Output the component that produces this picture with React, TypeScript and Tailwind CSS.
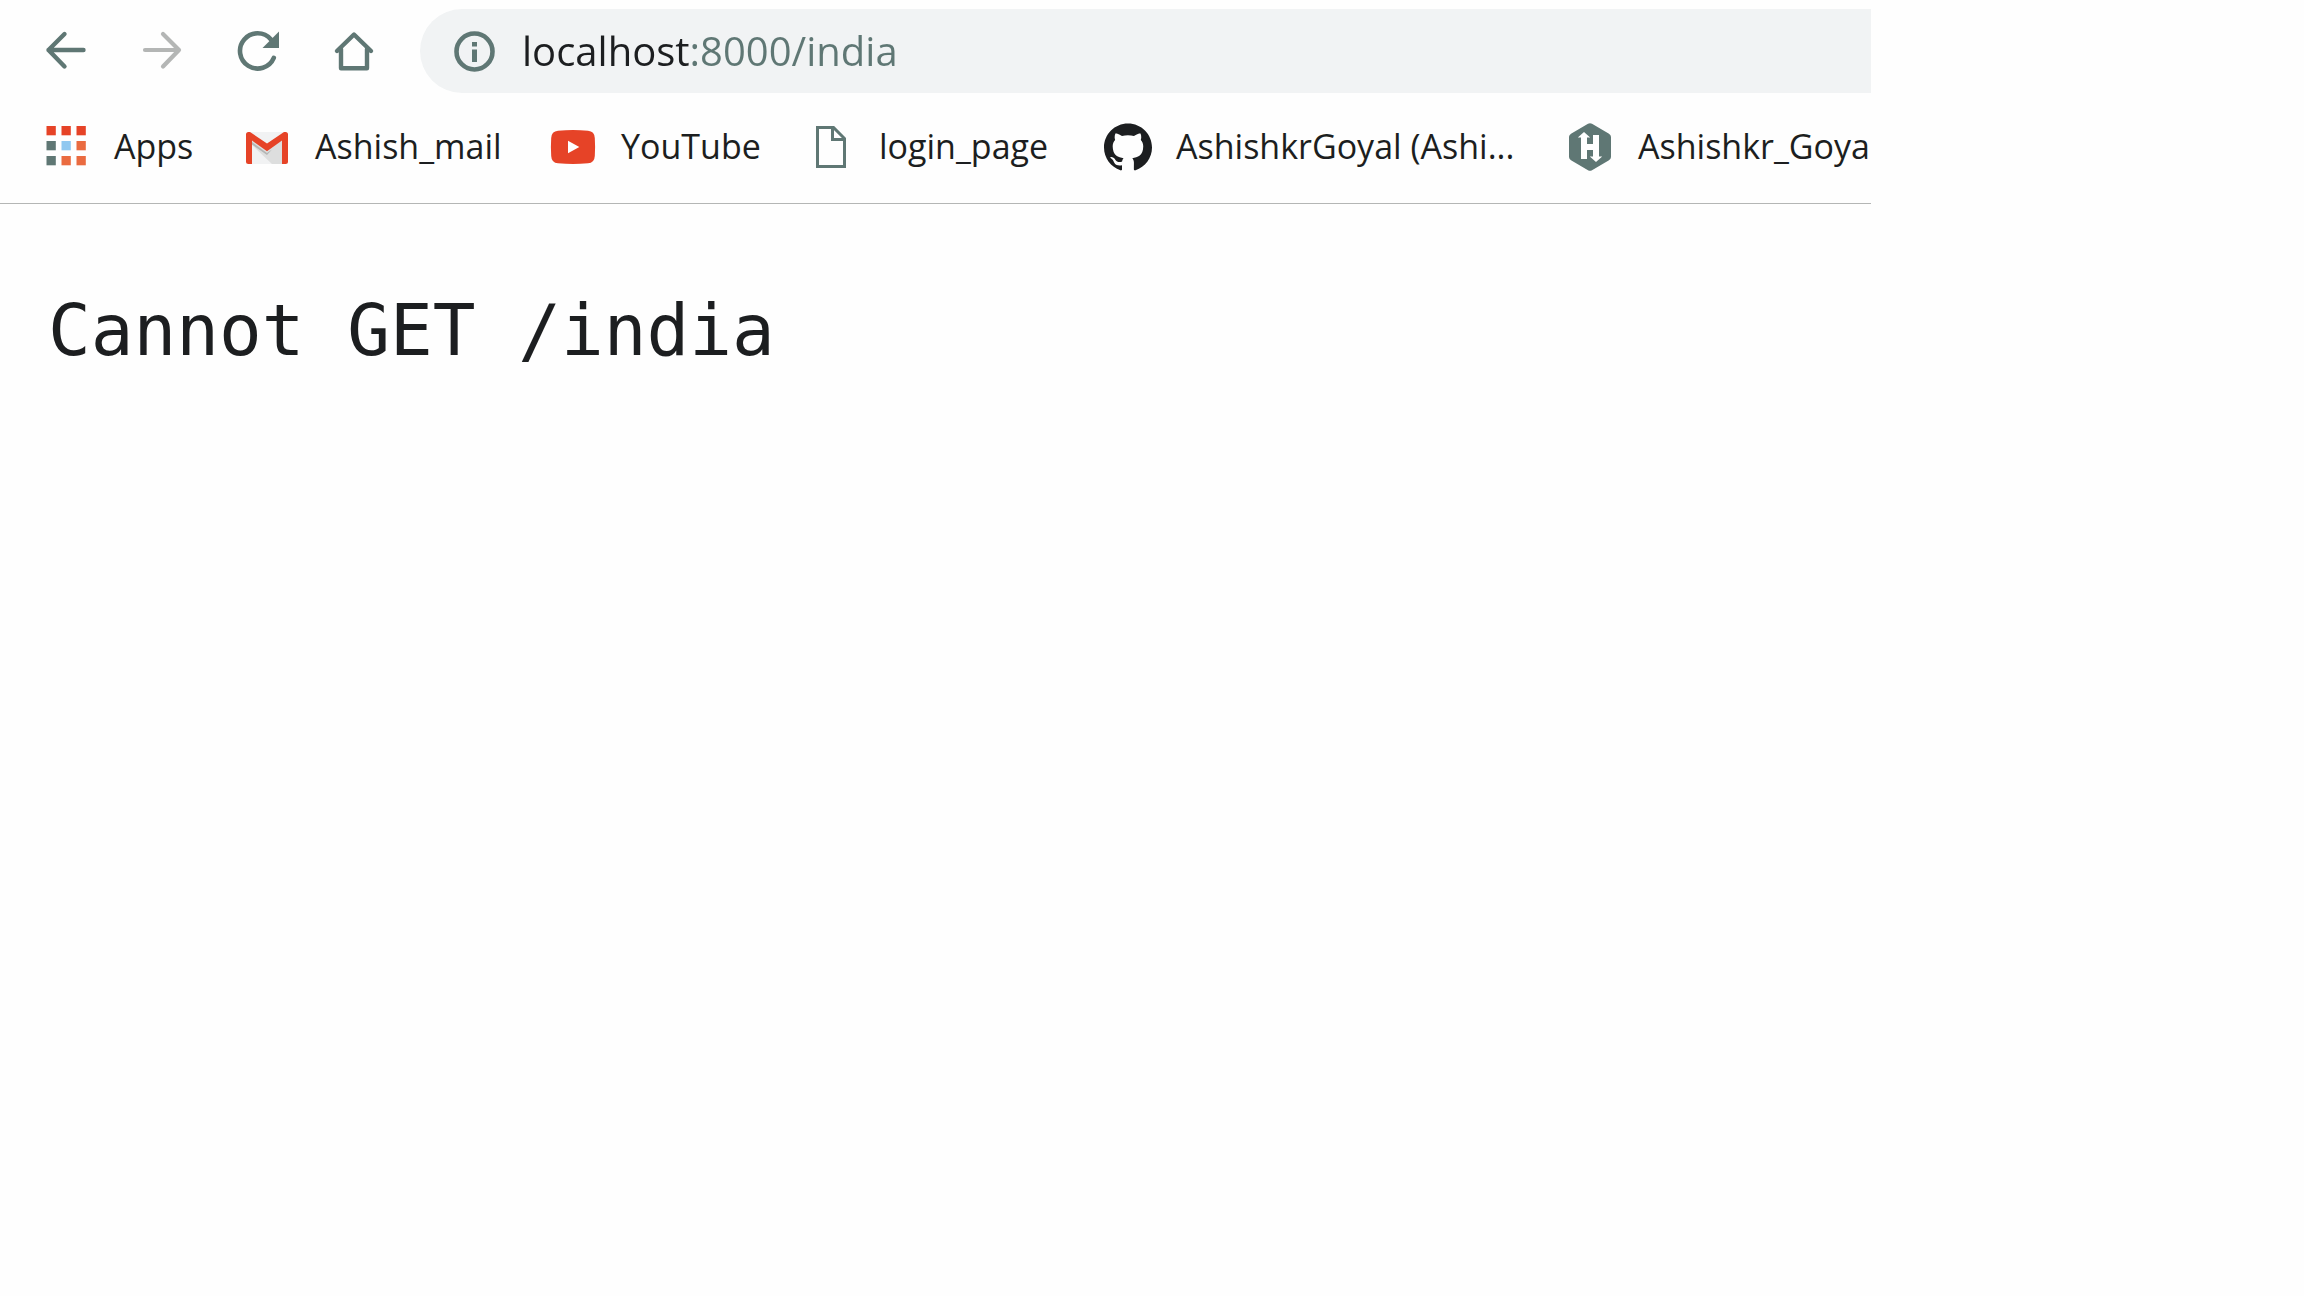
import React from "react";
import { SiGithub } from "react-icons/si";

const icon = "block size-12 shrink-0";

function BackIcon() {
  return (
    <svg viewBox="0 0 48 48" className={icon} fill="none" stroke="#5f7774" strokeWidth="4.4" strokeLinecap="round" strokeLinejoin="round">
      <path d="M6.5 23H41.5M22.5 7L6.5 23L22.5 39.5" />
    </svg>
  );
}

function ForwardIcon() {
  return (
    <svg viewBox="0 0 48 48" className={icon} fill="none" stroke="#b4b6b5" strokeWidth="4.2" strokeLinecap="round" strokeLinejoin="round">
      <path d="M7 23H41M25 7L41 23L25 39.5" />
    </svg>
  );
}

function ReloadIcon() {
  return (
    <svg viewBox="0 0 48 48" className={icon}>
      <path d="M37 12.5A17.6 17.6 0 1 0 39.8 30.8" fill="none" stroke="#5f7774" strokeWidth="4.6" strokeLinecap="round" />
      <path d="M45 4.5V21H28.5z" fill="#5f7774" />
    </svg>
  );
}

function HomeIcon() {
  return (
    <svg viewBox="0 0 48 48" className={icon} fill="none" stroke="#5f7774" strokeWidth="4.4" strokeLinecap="round" strokeLinejoin="round">
      <path d="M7 24L24 7.5L41 24M11 22V41.3H37V22" />
    </svg>
  );
}

function InfoIcon() {
  return (
    <svg viewBox="0 0 48 48" className={icon}>
      <circle cx="24.5" cy="24.5" r="18" fill="none" stroke="#5f7774" strokeWidth="4.6" />
      <path d="M22 15h5v4.5h-5zM22 22.5h5V35h-5z" fill="#5f7774" />
    </svg>
  );
}

function AppsIcon() {
  const cells = [
    [4.5, 3, "#e64327"], [19.5, 3, "#e64327"], [34.5, 3, "#e64327"],
    [4.5, 18, "#5f7774"], [19.5, 18, "#90c8f0"], [34.5, 18, "#ea6b40"],
    [4.5, 33, "#5f7774"], [19.5, 33, "#ea6b40"], [34.5, 33, "#ea6b40"],
  ] as const;
  return (
    <svg viewBox="0 0 48 48" className={icon}>
      {cells.map(([x, y, c]) => (
        <rect key={`${x}-${y}`} x={x} y={y} width="9.3" height="9.3" fill={c} />
      ))}
    </svg>
  );
}

function GmailIcon() {
  return (
    <svg viewBox="0 0 48 48" className={icon}>
      <rect x="3" y="9" width="42" height="32" rx="2.5" fill="#f1f2f3" />
      <path d="M9 17L24 28L39 17V41H29L9 22z" fill="#dddede" />
      <path d="M9 19L24 30L29 26.5L24 32L9 21.5z" fill="#b4b6b5" />
      <path d="M3 11.5Q3 9 5.5 9H7L24 20.5L41 9H42.5Q45 9 45 11.5V38.5Q45 41 42.5 41H39V17.5L24 28.3L9 17.5V41H5.5Q3 41 3 38.5z" fill="#e64327" />
    </svg>
  );
}

function YouTubeIcon() {
  return (
    <svg viewBox="0 0 48 48" className={icon}>
      <path d="M9 7.7Q24 6.3 39 7.7Q45.5 8.2 45.8 15Q46.4 24 45.8 33Q45.5 39.8 39 40.3Q24 41.7 9 40.3Q2.5 39.8 2.2 33Q1.6 24 2.2 15Q2.5 8.2 9 7.7z" fill="#e64327" />
      <path d="M19 17.8L30.3 24L19 30.2z" fill="#fff" />
    </svg>
  );
}

function PageIcon() {
  return (
    <svg viewBox="0 0 48 48" className={icon} fill="none" stroke="#5f7774" strokeWidth="3">
      <path d="M10.5 4.5H26.5L37.5 15.5V43.5H10.5z" />
      <path d="M25.5 4V16.5H38" />
    </svg>
  );
}

function HackerRankIcon() {
  return (
    <svg viewBox="0 0 48 48" className={icon}>
      <path d="M22 .8Q24 -.4 26 .8L43 10.8Q45 12 45 14V34Q45 36 43 37.2L26 47.2Q24 48.4 22 47.2L5 37.2Q3 36 3 34V14Q3 12 5 10.8z" fill="#5f7774" />
      <path d="M18 9L24.2 14.5H21V21H27V12H33V33.5H36.2L30 39L23.8 33.5H27V27H21V36H15V14.5H11.8z" fill="#fff" />
    </svg>
  );
}

const bookmarks = [
  { label: "Apps", width: "w-[201px]", icon: <AppsIcon /> },
  { label: "Ashish_mail", width: "w-[306px]", icon: <GmailIcon /> },
  { label: "YouTube", width: "w-[258px]", icon: <YouTubeIcon /> },
  { label: "login_page", width: "w-[297px]", icon: <PageIcon /> },
  { label: "AshishkrGoyal (Ashi...", width: "w-[462px]", icon: <SiGithub className="size-12 shrink-0 text-[#1c1e20]" /> },
  { label: "Ashishkr_Goya", width: "w-[305px]", icon: <HackerRankIcon /> },
];

export default function App() {
  return (
    <div className="min-h-screen bg-[#fefefe] text-[#1c1e20]">
      <div className="w-full max-w-[1871px] overflow-hidden font-['Open_Sans',sans-serif]">
        <header className="border-b border-[#b4b6b5]">
          <div className="flex items-center py-[9px] pl-[42px]">
            <nav aria-label="Navigation" className="flex gap-12">
              <button type="button" aria-label="Back"><BackIcon /></button>
              <button type="button" aria-label="Forward"><ForwardIcon /></button>
              <button type="button" aria-label="Reload"><ReloadIcon /></button>
              <button type="button" aria-label="Home"><HomeIcon /></button>
            </nav>
            <div className="ml-[42px] flex h-[84px] grow items-center gap-6 rounded-l-full bg-[#f1f3f4] pl-[30px]">
              <button type="button" aria-label="View site information"><InfoIcon /></button>
              <input
                type="text"
                aria-label="Address"
                defaultValue="localhost:8000/india"
                className="min-w-0 grow bg-[linear-gradient(to_right,#1c1e20_167px,#5f7774_167px)] bg-clip-text text-[40px] leading-[56px] text-transparent caret-[#1c1e20] outline-none"
              />
            </div>
          </div>
          <nav aria-label="Bookmarks" className="flex pt-[21px] pb-8 pl-[42px]">
            {bookmarks.map((b) => (
              <a key={b.label} href="#" className={`flex h-12 shrink-0 items-center gap-6 text-[34px] leading-[46px] whitespace-nowrap ${b.width}`}>
                {b.icon}
                <span className="pb-0.5">{b.label}</span>
              </a>
            ))}
          </nav>
        </header>
      </div>
      <main className="px-12 pt-[84px]">
        <pre className="font-['DejaVu_Sans_Mono',monospace] text-[71px] leading-[86px]">Cannot GET /india</pre>
      </main>
    </div>
  );
}
